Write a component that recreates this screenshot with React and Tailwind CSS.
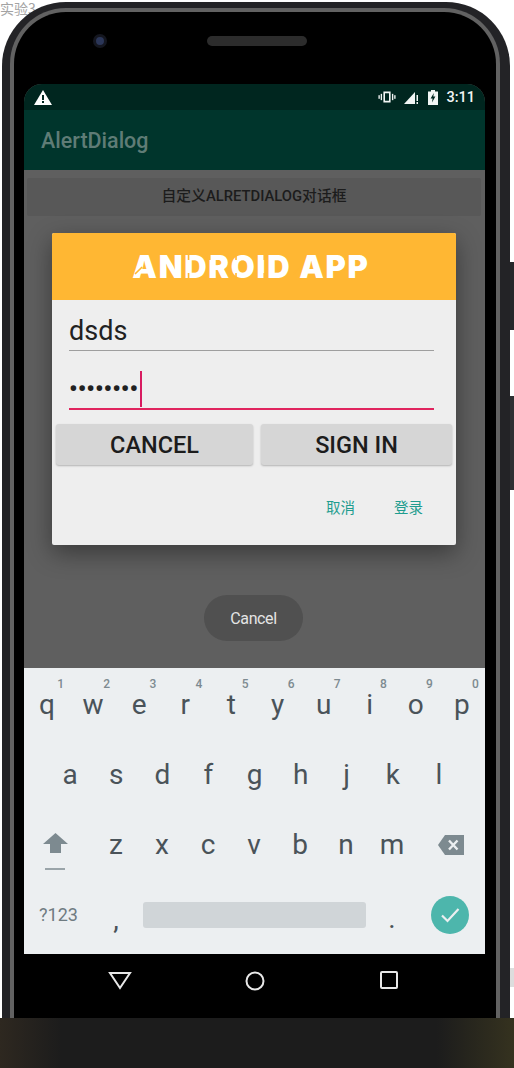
import React from 'react';

const roboto = "font-['Roboto',sans-serif]";

const row1 = [['q', '1'], ['w', '2'], ['e', '3'], ['r', '4'], ['t', '5'], ['y', '6'], ['u', '7'], ['i', '8'], ['o', '9'], ['p', '0']];
const row2 = ['a', 's', 'd', 'f', 'g', 'h', 'j', 'k', 'l'];
const row3 = ['z', 'x', 'c', 'v', 'b', 'n', 'm'];

function Key({ label, hint }) {
  return (
    <div className="relative flex flex-1 items-center justify-center text-[28px] leading-none text-[#4a5359]">
      {label}
      {hint && <span className="absolute right-[6px] top-[8px] text-[12px] font-medium text-[#7d8a90]">{hint}</span>}
    </div>
  );
}

function StatusIcons() {
  return (
    <div className="flex items-center text-[#f2f5f4]">
      <svg width="18" height="14" viewBox="0 0 20 14" fill="currentColor">
        <rect x="0.5" y="5" width="1.5" height="4" />
        <rect x="3" y="3.5" width="1.5" height="7" />
        <rect x="15.5" y="3.5" width="1.5" height="7" />
        <rect x="18" y="5" width="1.5" height="4" />
        <path d="M6 1h8v12H6z M7.8 2.8v8.4h4.4V2.8z" fillRule="evenodd" />
      </svg>
      <svg className="ml-[8px]" width="15" height="13" viewBox="0 0 15 13" fill="currentColor">
        <path d="M0 13 L11 1 V13 Z" />
        <rect x="12.5" y="4" width="1.5" height="6" />
        <rect x="12.5" y="11" width="1.5" height="2" />
      </svg>
      <svg className="ml-[9px]" width="10" height="15" viewBox="0 0 10 15" fill="currentColor">
        <path fillRule="evenodd" d="M3 0h4v1.5h3V15H0V1.5h3z M5.8 3 L2.6 8.6 H4.6 L4 12.5 L7.4 6.6 H5.3z" />
      </svg>
      <span className={`${roboto} ml-[8px] pt-[3px] text-[14.5px] font-medium leading-none`}>3:11</span>
    </div>
  );
}

export default function App() {
  return (
    <div className="relative flex h-[1068px] w-[514px] flex-col overflow-hidden bg-white">
      <div className="absolute left-0 top-0 font-['Noto_Sans_CJK_SC',sans-serif] text-[14px] leading-[16px] text-[#a3a3a3]">实验3</div>

      {/* side buttons */}
      <div className="absolute right-0 top-[262px] h-[68px] w-[6px] bg-[#26272a]"></div>
      <div className="absolute right-0 top-[396px] h-[94px] w-[6px] bg-[#2e2f32]"></div>
      <div className="absolute right-0 top-[968px] h-[19px] w-[6px] bg-[#dddddd]"></div>

      {/* phone body */}
      <div className="relative ml-[2px] mt-[2px] h-[1018px] w-[508px] shrink-0 self-start rounded-t-[64px] bg-[#232326] pl-[8px] pr-[10px] pt-[6px]">
        <div className="h-full rounded-t-[56px] bg-[#626262] pl-[4px] pr-[4px] pt-[4px]">
          <div className="flex h-full flex-col rounded-t-[52px] bg-black pl-[10px] pr-[11px]">
            {/* camera and speaker */}
            <div className="flex h-[72px] shrink-0 items-center pb-[14px]">
              <div className="ml-[69px] h-[14px] w-[14px] rounded-full border-[3px] border-[#14161f] bg-[#2b3658]"></div>
              <div className="ml-[100px] h-[10px] w-[100px] rounded-full bg-[#2c2c2c]"></div>
            </div>

            {/* screen */}
            <div className="relative flex h-[870px] shrink-0 flex-col overflow-hidden rounded-t-[18px] bg-[#5e5e5e]">
              <div className="flex h-[26px] shrink-0 items-center justify-between bg-[#00261f] pl-[10px] pr-[10px]">
                <svg width="18" height="15" viewBox="0 0 18 15">
                  <path d="M9 0 L18 15 H0 Z" fill="#ffffff" />
                  <rect x="8" y="5" width="2" height="5" fill="#00261f" />
                  <rect x="8" y="11" width="2" height="2" fill="#00261f" />
                </svg>
                <StatusIcons />
              </div>
              <div className={`${roboto} flex h-[60px] shrink-0 items-center bg-[#00352c] pl-[17px] pt-[3px] text-[21.5px] font-medium text-[#5f7c76]`}>AlertDialog</div>

              {/* content behind the dialog */}
              <div className="h-[498px] shrink-0 bg-[#5f5f5f] pl-[3px] pr-[4px] pt-[8px]">
                <div className="flex h-[38px] items-center justify-center rounded-[2px] bg-[#585858] pb-[1px] font-['Roboto','Noto_Sans_CJK_SC',sans-serif] text-[14.8px] font-medium text-[#1c1c1c]">自定义ALRETDIALOG对话框</div>
              </div>

              {/* keyboard */}
              <div className={`${roboto} flex flex-1 flex-col bg-[#eceff1] pt-[2px]`}>
                <div className="flex h-[70px]">
                  {row1.map(([k, n]) => <Key key={k} label={k} hint={n} />)}
                </div>
                <div className="flex h-[70px] pl-[23px] pr-[23px]">
                  {row2.map((k) => <Key key={k} label={k} />)}
                </div>
                <div className="flex h-[70px]">
                  <div className="flex w-[69px] flex-col items-center justify-center pr-[7px] pt-[13px]">
                    <svg width="25" height="20" viewBox="0 0 25 20" fill="#7d8a90">
                      <path d="M12.5 0 L25 11 H18 V20 H7 V11 H0 Z" />
                    </svg>
                    <div className="mt-[15px] h-[2px] w-[20px] bg-[#9aa4a9]"></div>
                  </div>
                  {row3.map((k) => <Key key={k} label={k} />)}
                  <div className="flex w-[70px] items-center justify-center pl-[2px]">
                    <svg width="26" height="20" viewBox="0 0 26 20">
                      <path d="M7 0 H26 V20 H7 L0 10 Z" fill="#7d8a90" />
                      <path d="M11 5.5 L19.5 14.5 M19.5 5.5 L11 14.5" stroke="#eceff1" strokeWidth="2.4" />
                    </svg>
                  </div>
                </div>
                <div className="flex h-[70px] items-center">
                  <div className="flex w-[69px] items-center justify-center pb-[2px] text-[18px] text-[#6f7b81]">?123</div>
                  <div className="flex w-[46px] justify-center pt-[10px] text-[28px] leading-none text-[#4a5359]">,</div>
                  <div className="ml-[4px] h-[26px] w-[223px] rounded-[3px] bg-[#d0d5d8]"></div>
                  <div className="flex w-[52px] justify-center pt-[8px] text-[28px] leading-none text-[#4a5359]">.</div>
                  <div className="ml-[13px] flex h-[38px] w-[38px] items-center justify-center rounded-full bg-[#4db6ac]">
                    <svg width="20" height="16" viewBox="0 0 20 16" fill="none" stroke="#eceff1" strokeWidth="2.2">
                      <path d="M2 8.5 L7.5 14 L18.5 2" />
                    </svg>
                  </div>
                </div>
              </div>

              {/* dialog */}
              <div className={`${roboto} absolute left-[28px] top-[149px] flex h-[312px] w-[404px] flex-col rounded-[2px] bg-[#eeeeee] shadow-[0_8px_24px_rgba(0,0,0,0.4)]`}>
                <div className="flex h-[67px] shrink-0 items-center justify-center rounded-t-[2px] bg-[#ffb733] pr-[6px]">
                  <div className="relative font-['Inter',sans-serif] text-[31px] font-black leading-none tracking-[1.7px] text-white">
                    ANDROID APP
                    {/* stencil cuts over the logo lettering */}
                    <svg className="absolute left-0 top-0 h-full w-full" viewBox="0 0 235 31" preserveAspectRatio="none" fill="none" stroke="#ffb733" strokeWidth="1.6">
                      <path d="M3 23 L10 16 M56 3 V9 M56 22 V28 M77 3 V9 M103 3 V9 M103 22 V28 M131 3 V9 M131 22 V28 M160 23 L167 16 M190 3 V9 M211 3 V9" />
                    </svg>
                  </div>
                </div>
                <div className="pl-[17px] pr-[22px] pt-[11px]">
                  <div className="flex h-[40px] items-center border-b border-b-[#9e9e9e] pt-[2px] text-[27px] leading-none text-[#212121]">dsds</div>
                  <div className="mt-[19px] flex h-[40px] items-center gap-[2px] border-b-2 border-b-[#e0245e]">
                    <span className="text-[24px] font-bold leading-none text-[#212121]">••••••••</span>
                    <span className="h-[36px] w-[1.5px] bg-[#d81b60]"></span>
                  </div>
                </div>
                <div className="flex gap-[8px] pl-[4px] pr-[4px] pt-[14px]">
                  <div className="flex h-[41px] w-[197px] items-center justify-center rounded-[3px] bg-[#d6d6d6] pt-[3px] text-[23.5px] font-medium text-[#1c1c1c] shadow-[0_1px_2px_rgba(0,0,0,0.25)]">CANCEL</div>
                  <div className="flex h-[41px] w-[191px] items-center justify-center rounded-[3px] bg-[#d6d6d6] pt-[3px] text-[23.5px] font-medium text-[#1c1c1c] shadow-[0_1px_2px_rgba(0,0,0,0.25)]">SIGN IN</div>
                </div>
                <div className="flex justify-end gap-[39px] pr-[33px] pt-[31px] font-['Noto_Sans_CJK_SC',sans-serif] text-[14.5px] leading-[22px] text-[#1f9d8f]">
                  <span>取消</span>
                  <span>登录</span>
                </div>
              </div>

              {/* toast */}
              <div className="absolute left-[180px] top-[511px] flex h-[46px] w-[99px] items-center justify-center rounded-full bg-[#505050] pt-[1px] font-['Roboto',sans-serif] text-[16px] tracking-[-0.4px] text-[#e4e4e4]">Cancel</div>
            </div>

            {/* nav bar */}
            <div className="flex flex-1 items-start justify-between pl-[84px] pr-[84px] pt-[17px]">
              <div className="flex w-[24px] justify-center">
                <svg width="24" height="20" viewBox="0 0 24 20" fill="none" stroke="#e8e8e8" strokeWidth="2">
                  <path d="M2 2 H22 L12 17 Z" />
                </svg>
              </div>
              <div className="flex w-[24px] justify-center">
                <svg width="20" height="20" viewBox="0 0 20 20" fill="none" stroke="#e8e8e8" strokeWidth="2">
                  <circle cx="10" cy="10" r="8.5" />
                </svg>
              </div>
              <div className="flex w-[24px] justify-center">
                <svg width="18" height="18" viewBox="0 0 18 18" fill="none" stroke="#e8e8e8" strokeWidth="2">
                  <rect x="1" y="1" width="16" height="16" rx="1" />
                </svg>
              </div>
            </div>
          </div>
        </div>
      </div>

      {/* what is below the phone in the screenshot */}
      <div className="absolute bottom-0 left-0 h-[50px] w-full bg-[linear-gradient(90deg,#2e2820_0%,#1c1c1c_12%,#1c1c1c_85%,#35321f_100%)]"></div>
    </div>
  );
}
